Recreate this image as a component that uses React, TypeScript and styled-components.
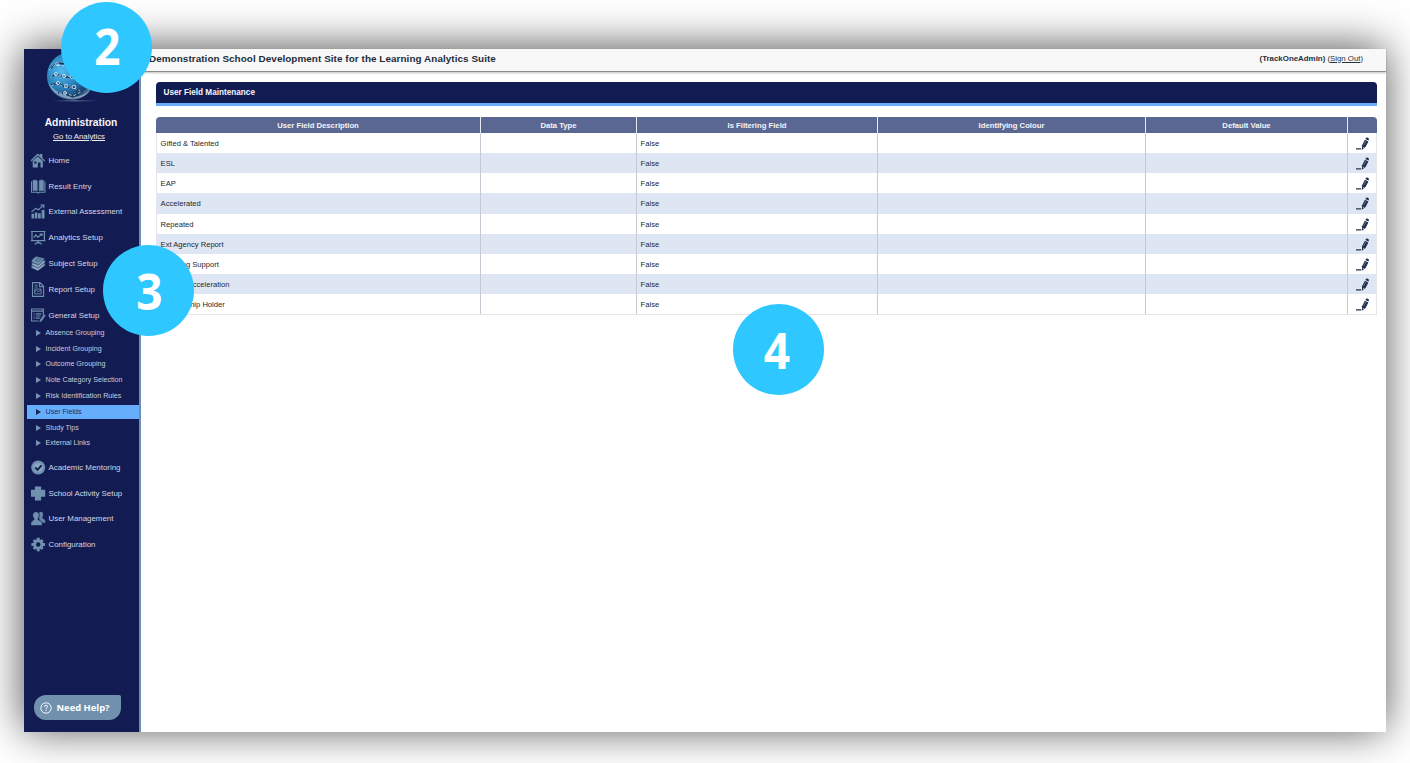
import React from 'react';
import styled, { createGlobalStyle } from 'styled-components';

const GlobalStyle = createGlobalStyle`
  * { box-sizing: border-box; }
  body { margin: 0; background: #fff; font-family: 'Liberation Sans', Arial, sans-serif; }
`;

const Page = styled.div`
  position: relative;
  width: 1410px;
  height: 763px;
  padding: 49px 24px 31px;
  overflow: hidden;
`;

const Window = styled.div`
  display: flex;
  width: 1362px;
  height: 683px;
  background: #fff;
  box-shadow: -1px -2px 40px 0 rgba(0, 0, 0, 0.68);
`;

const Sidebar = styled.aside`
  display: flex;
  flex-direction: column;
  width: 117px;
  flex: none;
  background: #121c52;
  border-right: 2px solid #6d8fb4;
`;

const Logo = styled.div`
  height: 54px;
  padding-left: 22px;
  svg { display: block; }
`;

const Role = styled.div`
  margin-top: 12px;
  padding-right: 1px;
  text-align: center;
  color: #f4f5fa;
  font-weight: bold;
  font-size: 10.3px;
  line-height: 15px;
`;

const SwitchLink = styled.a`
  padding-right: 5px;
  text-align: center;
  color: #eceef6;
  font-size: 7.8px;
  line-height: 13px;
  text-decoration: underline;
`;

const Nav = styled.nav`
  margin-top: 4.4px;
`;

const NavItem = styled.div`
  display: flex;
  align-items: center;
  gap: 3px;
  height: 25.8px;
  padding-left: 6.5px;
  color: #d3d8e6;
  font-size: 7.9px;
  white-space: nowrap;
  svg { width: 15px; height: 15px; flex: none; }
`;

const SubNav = styled.div`
  margin: -3px 0 3px 3px;
`;

const SubItem = styled.div<{ $active?: boolean }>`
  display: flex;
  align-items: center;
  gap: 4.4px;
  height: ${p => (p.$active ? '14px' : '15.8px')};
  margin: ${p => (p.$active ? '0.9px 0' : '0')};
  padding-left: 9.2px;
  background: ${p => (p.$active ? '#66aefb' : 'transparent')};
  color: ${p => (p.$active ? '#1b2c66' : '#c6ccdd')};
  font-size: 7.1px;
  white-space: nowrap;
  &::before {
    content: '';
    border-left: 5px solid ${p => (p.$active ? '#16244f' : '#7595b5')};
    border-top: 3px solid transparent;
    border-bottom: 3px solid transparent;
  }
`;

const HelpButton = styled.button`
  display: flex;
  align-items: center;
  gap: 4.5px;
  width: 87px;
  height: 25px;
  margin: auto 0 12px 10px;
  padding: 0 0 0 6px;
  border: 0;
  border-radius: 12px 2px 12px 12px;
  background: #7090ad;
  color: #fff;
  font: bold 9.4px 'Open Sans', sans-serif;
  white-space: nowrap;
`;

const Main = styled.main`
  flex: 1;
  min-width: 0;
`;

const TopBar = styled.header`
  display: flex;
  align-items: center;
  justify-content: space-between;
  height: 23px;
  padding: 0 23px 4px 8px;
  background: #f8f8f8;
  border-bottom: 1.5px solid #8b8b8b;
  box-shadow: 0 1px 2px rgba(0, 0, 0, 0.25);
`;

const SiteName = styled.h1`
  margin: 0;
  color: #1d2b3a;
  font-size: 9.9px;
  letter-spacing: 0.07px;
  white-space: nowrap;
`;

const Account = styled.div`
  color: #27313d;
  font-size: 7.8px;
  white-space: nowrap;
  b { font-size: 7.9px; font-weight: bold; }
`;

const Content = styled.section`
  padding: 10px 9px 0 15px;
`;

const PanelTitle = styled.h2`
  margin: 0 0 11px;
  height: 24px;
  padding-left: 7.5px;
  border-radius: 4px 4px 0 0;
  border-bottom: 3px solid #68adf8;
  background: #121c52;
  color: #f4f5fa;
  font-size: 8.2px;
  line-height: 21px;
`;

const Table = styled.div`
  border-bottom: 1px solid #e6e6ea;
  border-radius: 4px 4px 0 0;
  overflow: hidden;
`;

const Row = styled.div<{ $striped?: boolean }>`
  display: grid;
  grid-template-columns: 325px 156px 241px 268px 202px 1fr;
  height: 20.15px;
  background: ${p => (p.$striped ? '#dfe6f3' : '#fff')};
  box-shadow: inset 1px 0 #e4e6ec, inset -1px 0 #e4e6ec;
`;

const HeadRow = styled(Row)`
  height: 16px;
  background: #5a6792;
  box-shadow: none;
`;

const HeadCell = styled.div`
  border-right: 1px solid #e8ebf3;
  color: #f3f4f9;
  font-size: 7.7px;
  font-weight: bold;
  line-height: 17px;
  text-align: center;
  &:last-child { border-right: 0; }
`;

const Cell = styled.div`
  padding-left: 3.6px;
  border-right: 1px solid #c6c9d1;
  color: #24272d;
  font-size: 7.6px;
  line-height: 22px;
  white-space: nowrap;
  &:first-child { padding-left: 4.6px; }
  &:last-child { border-right: 0; padding: 4px 0 0 7px; line-height: 0; }
`;

const Badge = styled.div<{ $x: number; $y: number }>`
  position: absolute;
  left: ${p => p.$x}px;
  top: ${p => p.$y}px;
  display: flex;
  align-items: center;
  justify-content: center;
  width: 91px;
  height: 91px;
  border-radius: 50%;
  background: #2fc7ff;
`;

const Digit = styled.span<{ $dx?: number; $dy?: number }>`
  color: #fff;
  font: bold 50px 'Open Sans', sans-serif;
  line-height: 71px;
  transform: translate(${p => p.$dx ?? 0}px, ${p => p.$dy ?? 0}px) scaleX(0.92);
`;

const C = '#6f90ae';
const BG = '#121c52';

const icons: Record<string, React.ReactNode> = {
  home: (
    <g fill={C}>
      <path d="M0 7.4 7 .6l2 1.9V1h2.7v4l2.8 2.4-.8 1.1L7 2.5.8 8.5z" />
      <path d="M2 8 7 3.4 12.2 8v6.500H9.8V9.5H7.2v5H2z" />
      <path d="M3.5 8.5h2.2v2H3.5z" fill={BG} />
    </g>
  ),
  book: (
    <g fill="none" stroke={C}>
      <path d="M.8 2.5v10.7h5.5l1.2.9 1.2-.9h5.5V2.5" strokeWidth="1.1" />
      <path d="M2.3 1.2h3.2q1 .2 1 1V12q-.4-.6-1.2-.6h-3zM12.7 1.2H9.5q-1 .2-1 1V12q.4-.6 1.2-.6h3z" fill={C} strokeWidth=".6" />
    </g>
  ),
  growth: (
    <g fill={C}>
      <path d="M.8 9.8h2.6v4.7H.8zM4.1 8.5h2.6v6H4.1zM7.4 9.2H10v5.3H7.4zM10.9 6h2.9v8.5h-2.9z" />
      <path d="M.8 8 5 4.4l2.7 1.4 4.6-4.2M9.6 1h3.5v3.2" fill="none" stroke={C} strokeWidth="1.2" />
    </g>
  ),
  board: (
    <g fill="none" stroke={C} strokeWidth="1.2">
      <path d="M.3 1.5h14.4M1.3 1.5v9.2h12.4V1.5M.3 10.7h14.4M7.5 10.7v3M4 14.3l3.5-2.4 3.5 2.4" />
      <path d="m3.2 7.6 2-2.7 2 2.3L11.3 4M9 4h2.4v2" />
    </g>
  ),
  books: (
    <g stroke={BG} strokeWidth=".4" fill={C}>
      <path d="M.5 9.8v2.2l6.7 3 7.3-5.600V7z" />
      <path d="M.8 6.9v2.3l6.800 2.7 6.8-5.4V4z" />
      <path d="M.4 6Q2 2 5.5.3l8.8 2.3-6.2 6.2z" />
      <path d="M2 11.1l5.5 2.3 5.6-4.5M2 8.3l5.6 2.2 5.8-4.9" fill="none" stroke="#c5d2e0" strokeWidth=".6" />
      <path d="m4.5 4.4 1.9-1.9 3.8 1-1.9 2z" fill="none" />
    </g>
  ),
  report: (
    <g fill="none" stroke={C} strokeWidth="1.1">
      <path d="M1.8.6h7.4l3.7 3.7v10.1H1.8zM8.9.6v4h4" />
      <path d="M4 7h6.4v4.8H4zM4 10l2-1.6 1.6 1.3 2.8-1.9M4 3.2h3M4 5h3" strokeWidth=".9" />
    </g>
  ),
  general: (
    <g fill="none" stroke={C} strokeWidth="1.2">
      <path d="M12.6 7V1H.8v12h7M.8 3.2h11.8" />
      <path d="M2.8 5.8h1M5 5.8h5.500M2.8 8h1M5 8h5M2.8 10.2h1M5 10.2h4" />
      <path d="m9 14 .5-2.3 3.7-5.2 1.5 1-3.6 5.3z" fill={C} strokeWidth=".4" />
    </g>
  ),
  check: (
    <g>
      <circle cx="7.5" cy="7.5" r="7" fill={C} />
      <circle cx="7.5" cy="7.5" r="4.6" fill="#8ba6c0" />
      <path d="m4.4 7.4 2.4 2.5 4-4.6" fill="none" stroke={BG} strokeWidth="1.9" />
    </g>
  ),
  plus: <path d="M4.2.5h6.2v3.3h4.1v7h-4.1v3.7H4.2v-3.7H.3v-7h3.9z" fill={C} />,
  users: (
    <g fill={C}>
      <path d="M8.5 1.2c2.5-1.5 4.3.2 3.9 2.600-.1 1.4-.8 2-.8 3.2l2.9 2.2v2.5h-3.6L8.5 8z" opacity=".9" />
      <path d="M2 4.2c0-4.7 6.5-4.7 6.5 0 0 2.2-1.3 2.9-1.3 4.3l3.3 1.8c1 .8 1 2.4 1 4.2H.1c0-1.8 0-3.4 1-4.2l2.4-1.8C3.5 7.1 2 6.4 2 4.2z" stroke={BG} strokeWidth=".6" />
    </g>
  ),
  gear: (
    <g fill={C}>
      <path d="M6 .7h3v13.6H6z" />
      <path d="M6 1.2h3v12.6H6z" transform="rotate(45 7.5 7.5)" />
      <path d="M6 .7h3v13.6H6z" transform="rotate(90 7.5 7.5)" />
      <path d="M6 1.2h3v12.6H6z" transform="rotate(135 7.5 7.5)" />
      <circle cx="7.5" cy="7.5" r="4.9" />
      <circle cx="7.5" cy="7.5" r="2.2" fill={BG} />
    </g>
  ),
};

const Icon = ({ name }: { name: string }) => <svg viewBox="0.3 0 15 15">{icons[name]}</svg>;

const Globe = () => (
  <svg width="54" height="54" viewBox="0 0 54 54">
    <defs>
      <radialGradient id="globe" cx=".3" cy=".4" r=".75">
        <stop offset="0" stopColor="#52bdf0" />
        <stop offset=".45" stopColor="#2c83bd" />
        <stop offset=".8" stopColor="#1b426f" />
        <stop offset="1" stopColor="#7da0bd" />
      </radialGradient>
      <linearGradient id="glow">
        <stop offset="0" stopColor="#8894bd" stopOpacity="0" />
        <stop offset=".5" stopColor="#9aa3c8" />
        <stop offset="1" stopColor="#8894bd" stopOpacity="0" />
      </linearGradient>
    </defs>
    <circle cx="25" cy="27" r="24" fill="url(#globe)" />
    <path d="M2 33q5 14 20 17 14 1 22-8-13 9-25 4Q7 42 2 33z" fill="#bdccd8" opacity=".6" />
    <g fill="none" stroke="#123258" strokeWidth="1.5">
      <path d="M4 20l7-6 8 1 8-4M4 29l6-4 8 3 9 0 8 6M5 36l7-2 7 4 8 0 7 5M12 44l6 0 9 4 8-5" />
    </g>
    <g fill="none" stroke="#dbe8f2" strokeWidth=".8">
      <path d="M3 21l6-5 8 1 8-5M4 29l6-4 8 3 8-1 8 6M5 37l6-3 7 4 8 0 8 4M13 44l6 0 8 3 8-4" strokeDasharray="3 2" />
      <circle cx="11" cy="15" r="1.4" /><circle cx="10" cy="25" r="1.5" />
      <circle cx="18" cy="27" r="1.6" /><circle cx="12" cy="34" r="1.6" />
      <circle cx="20" cy="37" r="1.8" /><circle cx="28" cy="38" r="1.8" />
      <circle cx="26" cy="28" r="1.6" /><circle cx="19" cy="44" r="1.5" />
    </g>
    <path d="M6 51.5h46v.8H6z" fill="url(#glow)" />
  </svg>
);

const EditIcon = () => (
  <svg width="15" height="14" viewBox="0 0 15 14">
    <path d="M1 11.9h5.2" stroke="#24364f" strokeWidth="1.3" />
    <path d="m6.9 12.8.2-4.6 2.8-5.4 3.5 1.7-2.9 5.6z" fill="#1c2d49" />
    <path d="m10.4 2 .5-.9q.6-.9 2-.3t1 1.7l-.5 1z" fill="#1c2d49" />
    <path d="m8.7 8.200 2.3-4.4" stroke="#8fa0b8" strokeWidth=".6" />
    <path d="m7.9 11.2.1-1.5 1.1.6z" fill="#dde4ee" />
  </svg>
);

const HelpIcon = () => (
  <svg width="12" height="12" viewBox="0 0 12 12" fill="none" stroke="#fff">
    <circle cx="6" cy="6" r="5.2" strokeWidth=".9" />
    <path d="M4.4 4.8Q4.4 3.3 6 3.3t1.6 1.4Q7.6 5.6 6 6.4V7.2M6 8v1" strokeWidth="1" />
  </svg>
);

const topItems = [
  ['home', 'Home'], ['book', 'Result Entry'], ['growth', 'External Assessment'],
  ['board', 'Analytics Setup'], ['books', 'Subject Setup'], ['report', 'Report Setup'],
  ['general', 'General Setup'],
];
const subItems = [
  'Absence Grouping', 'Incident Grouping', 'Outcome Grouping', 'Note Category Selection',
  'Risk Identification Rules', 'User Fields', 'Study Tips', 'External Links',
];
const bottomItems = [
  ['check', 'Academic Mentoring'], ['plus', 'School Activity Setup'],
  ['users', 'User Management'], ['gear', 'Configuration'],
];
const columns = [
  'User Field Description', 'Data Type', 'Is Filtering Field', 'Identifying Colour', 'Default Value', '',
];
const fields = [
  'Gifted & Talented', 'ESL', 'EAP', 'Accelerated', 'Repeated', 'Ext Agency Report',
  'Learning Support', 'Subject Acceleration', 'Scholarship Holder',
];

export default function App() {
  return (
    <Page>
      <GlobalStyle />
      <Window>
        <Sidebar>
          <Logo><Globe /></Logo>
          <Role>Administration</Role>
          <SwitchLink>Go to Analytics</SwitchLink>
          <Nav>
            {topItems.map(([icon, label]) => (
              <NavItem key={label}><Icon name={icon} />{label}</NavItem>
            ))}
            <SubNav>
              {subItems.map(label => (
                <SubItem key={label} $active={label === 'User Fields'}>{label}</SubItem>
              ))}
            </SubNav>
            {bottomItems.map(([icon, label]) => (
              <NavItem key={label}><Icon name={icon} />{label}</NavItem>
            ))}
          </Nav>
          <HelpButton><HelpIcon />Need Help?</HelpButton>
        </Sidebar>
        <Main>
          <TopBar>
            <SiteName>Demonstration School Development Site for the Learning Analytics Suite</SiteName>
            <Account><b>(TrackOneAdmin)</b> (<u>Sign Out</u>)</Account>
          </TopBar>
          <Content>
            <PanelTitle>User Field Maintenance</PanelTitle>
            <Table>
              <HeadRow>
                {columns.map(c => <HeadCell key={c}>{c}</HeadCell>)}
              </HeadRow>
              {fields.map((name, i) => (
                <Row key={name} $striped={i % 2 === 1}>
                  <Cell>{name}</Cell>
                  <Cell />
                  <Cell>False</Cell>
                  <Cell />
                  <Cell />
                  <Cell><EditIcon /></Cell>
                </Row>
              ))}
            </Table>
          </Content>
        </Main>
      </Window>
      <Badge $x={61} $y={2}><Digit $dx={1} $dy={-1}>2</Digit></Badge>
      <Badge $x={103} $y={244.5}><Digit $dx={1} $dy={1}>3</Digit></Badge>
      <Badge $x={733} $y={303.5}><Digit $dx={-1.5} $dy={1}>4</Digit></Badge>
    </Page>
  );
}
